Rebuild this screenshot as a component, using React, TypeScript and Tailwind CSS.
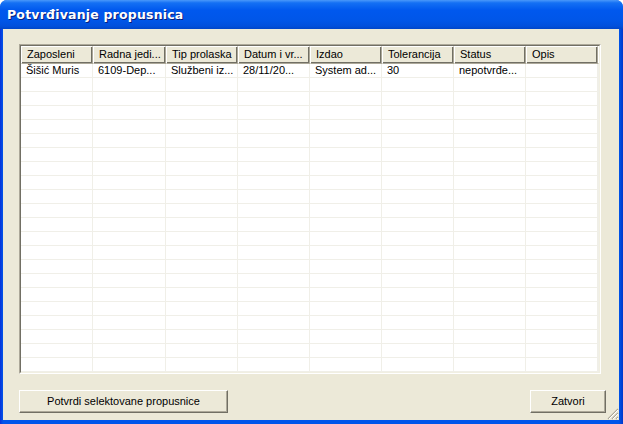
import React from "react";

const cols = [
  { name: "Zaposleni", w: 72, v: "Šišić Muris" },
  { name: "Radna jedi...", w: 73, v: "6109-Dep..." },
  { name: "Tip prolaska", w: 72, v: "Službeni iz..." },
  { name: "Datum i vr...", w: 72, v: "28/11/20..." },
  { name: "Izdao", w: 72, v: "System ad..." },
  { name: "Tolerancija", w: 72, v: "30" },
  { name: "Status", w: 72, v: "nepotvrđe..." },
  { name: "Opis", w: 72, v: "" },
];

const font = { fontFamily: '"Liberation Sans", Arial, sans-serif' };

export default function App() {
  const rows = Array.from({ length: 22 });
  return (
    <div className="w-[623px] h-[424px] bg-white overflow-hidden" style={font}>
      <div className="w-[623px] h-[424px] flex flex-col rounded-t-[7px] overflow-hidden bg-[#0054e3]">
        {/* title bar */}
        <div className="h-[29px] shrink-0 flex items-center pl-[7px] bg-[linear-gradient(180deg,#4a98fa_0%,#1470f4_10%,#0058ee_35%,#0056e8_70%,#0150dc_90%,#0046c8_100%)]">
          <span
            className="text-white font-bold tracking-[0.2px] mt-[1px]"
            style={{ fontFamily: '"DejaVu Sans", sans-serif', textShadow: "1px 1px 0 #0a1e7a", fontSize: "12.5px" }}
          >
            Potvrđivanje propusnica
          </span>
        </div>
        {/* frame */}
        <div className="flex-1 flex pl-[3px] pr-[4px] pb-[4px] bg-[linear-gradient(90deg,#0831d9_0px,#0055ea_3px,#0055ea_calc(100%-4px),#0037c9_100%)]">
          <div className="flex-1 relative bg-[#ece9d8] flex flex-col px-[16px] pt-[15px]">
            {/* list view */}
            <div className="w-[582px] h-[330px] border-t border-l border-t-[#aca899] border-l-[#aca899] border-b border-r border-b-white border-r-white">
              <div className="w-full h-full border border-[#716f64] border-r-[#f1efe2] border-b-[#f1efe2] bg-white flex flex-col overflow-hidden">
                {/* header */}
                <div className="flex h-[18px] shrink-0 bg-[#ece9d8]">
                  {cols.map((c) => (
                    <div
                      key={c.name}
                      style={{ width: c.w }}
                      className="shrink-0 h-[18px] border-t border-l border-white border-r border-r-[#aca899] border-b border-b-[#aca899] shadow-[inset_-1px_-1px_0_#716f64] text-[11px] text-black leading-[15px] pl-[5px] whitespace-nowrap overflow-hidden"
                    >
                      {c.name}
                    </div>
                  ))}
                  <div className="flex-1 h-[18px] border-t border-l border-white shadow-[inset_0_-1px_0_#716f64] border-b border-b-[#aca899]" />
                </div>
                {/* body */}
                <div className="flex flex-col">
                  {rows.map((_, i) => (
                    <div key={i} className="flex h-[14px] shrink-0 border-b border-[#f0efe8]">
                      {cols.map((c) => (
                        <div
                          key={c.name}
                          style={{ width: c.w }}
                          className="shrink-0 h-[13px] border-r border-[#f0efe8] text-[11px] leading-[13px] pl-[5px] text-black whitespace-nowrap overflow-hidden"
                        >
                          {i === 0 ? c.v : ""}
                        </div>
                      ))}
                      <div className="w-[3px] h-[13px] border-r border-[#f0efe8]" />
                    </div>
                  ))}
                </div>
              </div>
            </div>
            {/* buttons */}
            <div className="flex justify-between mt-[16px] mr-[-3px]">
              <button className="w-[209px] h-[23px] bg-[#ece9d8] border border-white border-r-[#716f64] border-b-[#716f64] shadow-[inset_-1px_-1px_0_#aca899] text-[11px] text-black">
                Potvrdi selektovane propusnice
              </button>
              <button className="w-[76px] h-[23px] bg-[#ece9d8] border border-white border-r-[#716f64] border-b-[#716f64] shadow-[inset_-1px_-1px_0_#aca899] text-[11px] text-black">
                Zatvori
              </button>
            </div>
            {/* resize grip */}
            <svg className="absolute right-0 bottom-0" width="13" height="13" viewBox="0 0 13 13">
              {[0, 4, 8].map((o) => (
                <g key={o}>
                  <line x1={12} y1={2 + o} x2={2 + o} y2={12} stroke="#aca899" strokeWidth="1.2" />
                  <line x1={12} y1={3 + o} x2={3 + o} y2={12} stroke="#fff" strokeWidth="1" />
                </g>
              ))}
            </svg>
          </div>
        </div>
      </div>
    </div>
  );
}
